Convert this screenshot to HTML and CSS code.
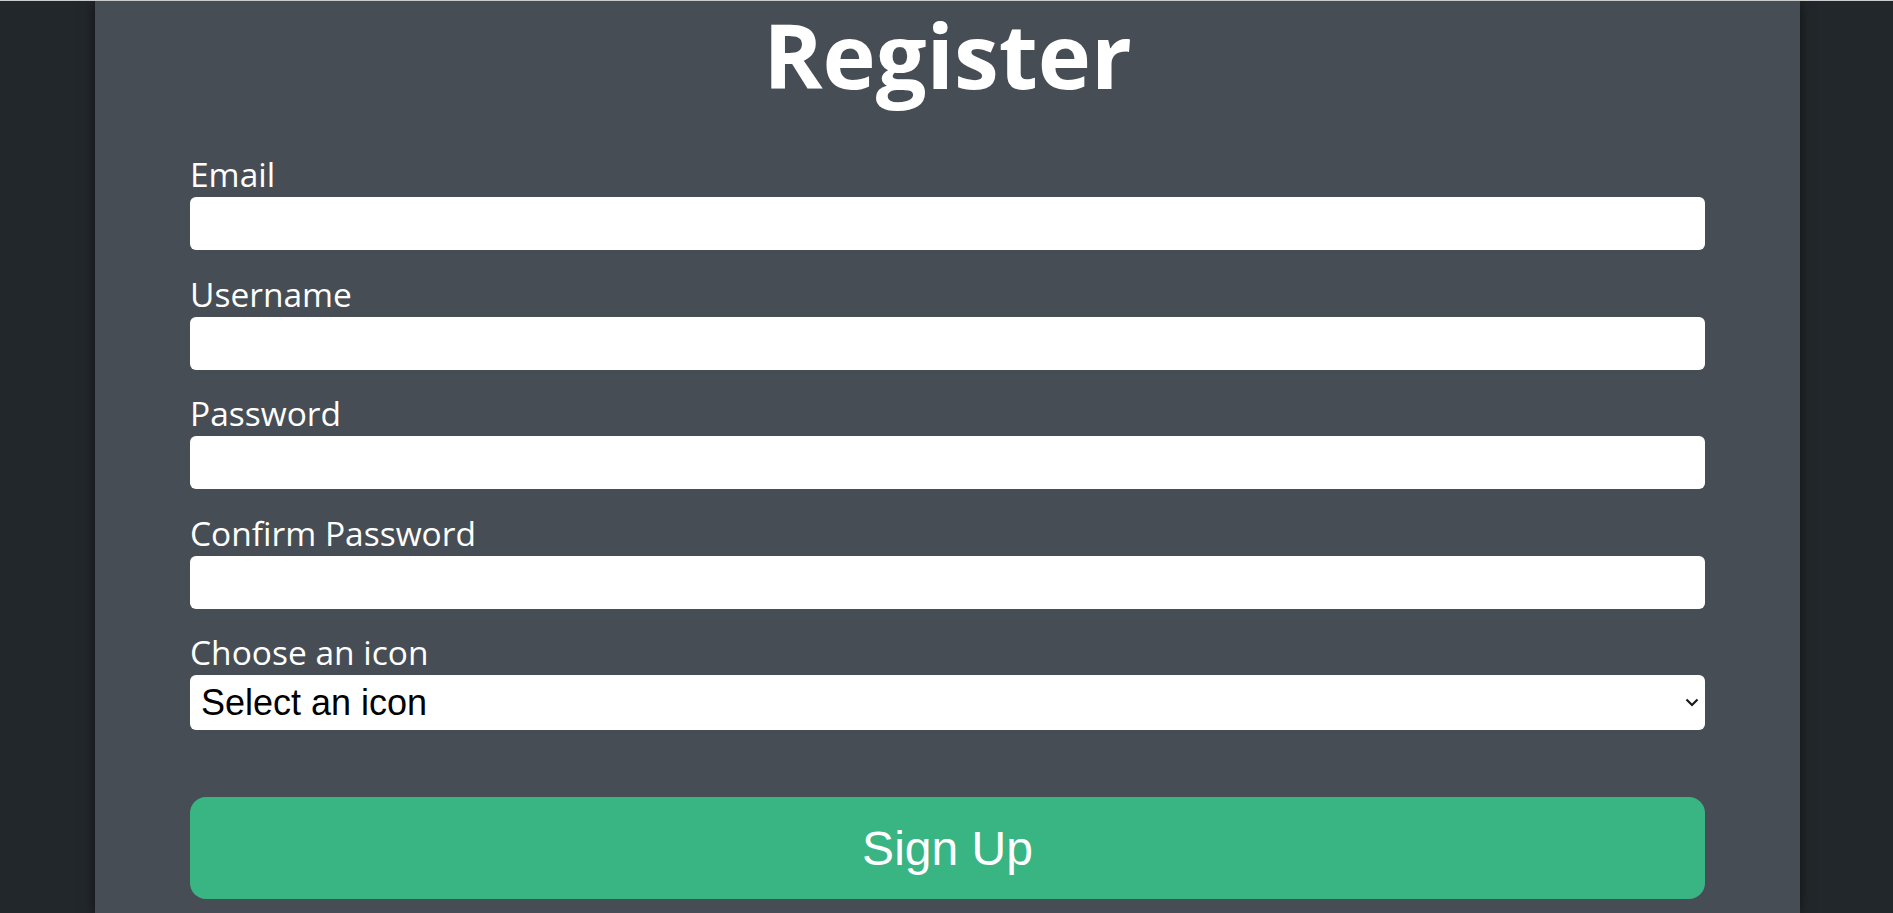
FILE: index.html
```html
<!DOCTYPE html>
<html lang="en">
<head>
<meta charset="utf-8">
<title>Register</title>
<link rel="stylesheet" href="styles.css">
</head>
<body>
<main class="panel">
  <h1 class="title">Register</h1>
  <form class="form">
    <div class="field">
      <label class="label" for="email">Email</label>
      <input class="input" id="email" type="email">
    </div>
    <div class="field">
      <label class="label" for="username">Username</label>
      <input class="input" id="username" type="text">
    </div>
    <div class="field">
      <label class="label" for="password">Password</label>
      <input class="input" id="password" type="password">
    </div>
    <div class="field">
      <label class="label" for="confirm">Confirm Password</label>
      <input class="input" id="confirm" type="password">
    </div>
    <div class="field field-select">
      <label class="label" for="icon">Choose an icon</label>
      <div class="select-wrap">
        <select class="select" id="icon">
          <option>Select an icon</option>
        </select>
        <svg class="chevron" width="14" height="9" viewBox="0 0 14 9" aria-hidden="true">
          <path d="M1.5 1.5 L7 7 L12.5 1.5" fill="none" stroke="#1a1a1a" stroke-width="2.2"/>
        </svg>
      </div>
    </div>
    <button class="submit" type="button">Sign Up</button>
  </form>
</main>
</body>
</html>
```

FILE: styles.css
```css
html {
  margin: 0;
  padding: 0;
  height: 913px;
  overflow: hidden;
}

body {
  margin: 0;
  padding: 0;
  background: #22272b;
  border-top: 1px solid #c9cbcc;
  height: 913px;
  box-sizing: border-box;
  overflow: hidden;
  font-family: "Open Sans", "Noto Sans", sans-serif;
}

.panel {
  width: 1705px;
  margin: 0 0 0 95px;
  height: 912px;
  background: #474d54;
  box-shadow: 0 0 12px rgba(0, 0, 0, 0.55);
  padding: 0 95px;
  box-sizing: border-box;
  display: flex;
  flex-direction: column;
}

.title {
  margin: 0;
  font-size: 90px;
  line-height: 106px;
  height: 106px;
  font-weight: 700;
  color: #ffffff;
  text-align: center;
}

.form {
  margin-top: 45px;
  display: flex;
  flex-direction: column;
}

.field {
  display: flex;
  flex-direction: column;
  margin-bottom: 21.5px;
}

.field-select {
  margin-bottom: 67px;
}

.label {
  display: block;
  color: #ffffff;
  font-size: 33.5px;
  line-height: 45px;
  height: 45px;
}

.input {
  display: block;
  height: 53px;
  border: none;
  border-radius: 6px;
  background: #ffffff;
  margin: 0;
  padding: 0 12px;
  box-sizing: border-box;
  width: 100%;
  font-size: 24px;
}

.select-wrap {
  position: relative;
}

.select {
  display: block;
  width: 100%;
  height: 55px;
  border: none;
  border-radius: 6px;
  background: #ffffff;
  margin: 0;
  padding: 0 12px 0 11px;
  box-sizing: border-box;
  -webkit-appearance: none;
  appearance: none;
  font-family: "Liberation Sans", Arial, sans-serif;
  font-size: 36px;
  color: #000000;
}

.chevron {
  position: absolute;
  right: 6px;
  top: 23px;
  pointer-events: none;
}

.submit {
  display: block;
  width: 100%;
  height: 102px;
  border: none;
  border-radius: 16px;
  background: #38b582;
  color: #ffffff;
  font-family: "Liberation Sans", Arial, sans-serif;
  font-size: 48px;
  padding: 0;
  margin: 0;
}
```
